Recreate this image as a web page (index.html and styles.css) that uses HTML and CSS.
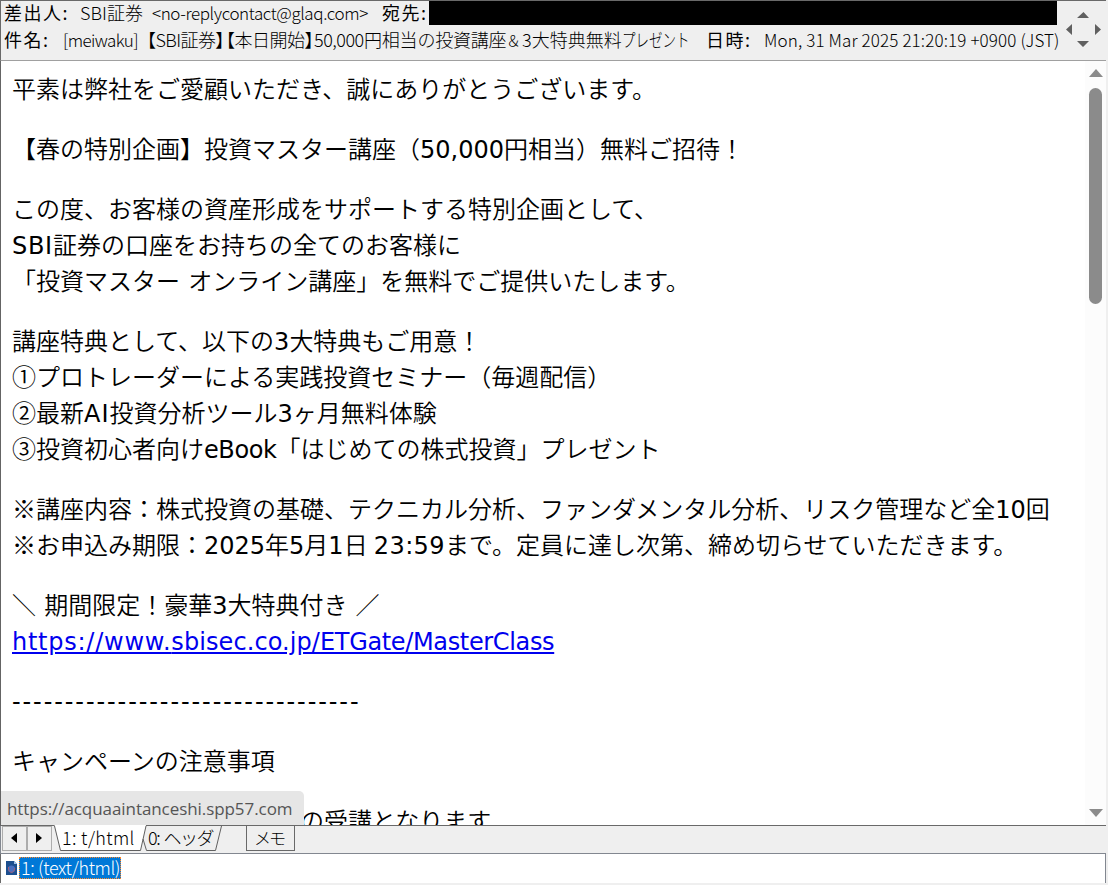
FILE: index.html
```html
<!DOCTYPE html>
<html lang="ja">
<head>
    <meta charset="utf-8" />
    <title>メール</title>
    <link rel="stylesheet" href="styles.css">
</head>
<body>
<div class="window">
    <header class="mail-header">
        <div class="fields">
            <div class="row">
                <b class="label from">差出人:</b>
                <span class="from-name">SBI証券</span>
                <span class="from-address">&lt;no-replycontact@glaq.com&gt;</span>
                <b class="label to">宛先:</b>
                <span class="redacted"></span>
            </div>
            <div class="row">
                <b class="label subject">件名:</b>
                <span class="tag">[meiwaku]</span>
                <span class="sender">【SBI証券】</span>
                <span class="opening">【本日開始】</span>
                <span class="amount">50,000</span>
                <span class="course">円相当の投資講座</span>
                <span class="amp">＆</span>
                <span class="bonus">3大特典無料</span>
                <span class="present"><span class="narrow">プレゼント</span></span>
                <b class="label date">日時:</b>
                <span class="date-value">Mon, 31 Mar 2025 21:20:19 +0900 (JST)</span>
            </div>
        </div>
        <svg class="pad" width="49" height="59" viewBox="1057 1 49 59">
            <path d="M1077 18 L1083.5 12 L1089 18Z M1077 41 H1089 L1083 47Z M1072 24 V35 L1066 29.5Z M1095 24 V35 L1101 29.5Z"/>
        </svg>
    </header>
    <div class="viewer">
        <main class="message">
            <p>平素は弊社をご愛顧いただき、誠にありがとうございます。</p>
            <p>【春の特別企画】投資マスター講座（<span class="en">50,000</span>円相当）無料ご招待！</p>
            <p>この度、お客様の資産形成をサポートする特別企画として、<br>
               <span class="en sbi">SBI</span>証券の口座をお持ちの全てのお客様に<br>
               「投資マスター オンライン講座」を無料でご提供いたします。</p>
            <p>講座特典として、以下の<span class="en">3</span>大特典もご用意！<br>
               ①プロトレーダーによる実践投資セミナー（毎週配信）<br>
               ②最新<span class="en ai">AI</span>投資分析ツール<span class="en">3</span>ヶ月無料体験<br>
               ③投資初心者向け<span class="en ebook">eBook</span>「はじめての株式投資」プレゼント</p>
            <p>※講座内容：株式投資の基礎、テクニカル分析、ファンダメンタル分析、リスク管理など全<span class="en">10</span>回<br>
               ※お申込み期限：<span class="en">2025</span>年<span class="en">5</span>月<span class="en">1</span>日 <span class="en time">23:59</span>まで。定員に達し次第、締め切らせていただきます。</p>
            <p>＼ 期間限定！豪華<span class="en">3</span>大特典付き ／<br>
               <a class="en" href="#"><span class="host">https://www.</span>sbisec.co.jp/<span class="path">ETGate/MasterClass</span></a></p>
            <p><span class="en rule">---------------------------------</span></p>
            <p>キャンペーンの注意事項</p>
            <p class="cut">の受講となります</p>
        </main>
        <div class="scrollbar">
            <svg width="14" height="8" viewBox="0 0 14 8"><path d="M0 8 L7 0 L14 8Z"/></svg>
            <div class="thumb"></div>
            <svg width="14" height="8" viewBox="0 0 14 8"><path d="M0 0 H14 L7 8Z"/></svg>
        </div>
        <div class="status">https://acquaaintanceshi.spp57.com</div>
    </div>
    <nav class="tabs">
        <span class="arrow"><svg width="6" height="10" viewBox="0 0 6 10"><path d="M6 0 V10 L0 5Z"/></svg></span>
        <span class="arrow"><svg width="6" height="10" viewBox="0 0 6 10"><path d="M0 0 V10 L6 5Z"/></svg></span>
        <div class="sheet">
            <svg class="sheet-lines" width="170" height="26" viewBox="53 825 170 26">
                <path class="active" d="M54.5 825 L60.5 850.5 H140.5 L146 825Z"/>
                <path d="M54.5 826 L60.5 850.5 H140.5 L146 826 M143 839 L146.5 850.5 H215.5 L221.5 826"/>
            </svg>
            <span class="sheet-html">1: t/html</span>
            <span class="sheet-head">0: ヘッダ</span>
        </div>
        <span class="memo">メモ</span>
    </nav>
    <footer class="parts">
        <svg width="11" height="14" viewBox="0 0 11 14">
            <path fill="#1d4f8f" d="M0 0 H8 L11 3 V14 H0Z"/>
            <path fill="#9fc0e8" d="M8 0 L11 3 H8Z"/>
            <circle cx="5.5" cy="8" r="3.6" fill="#4a6fc0"/>
            <path d="M2.5 6 Q2 11 6 11.5 Q9 10 8.8 7" fill="none" stroke="#a0607a"/>
        </svg>
        <span class="selected">1: (text/html)</span>
    </footer>
</div>
</body>
</html>
```
FILE: styles.css
```css
* { box-sizing: border-box; }
body {
    margin: 0;
    background: #efefef;
    color: #000;
    font-family: "Noto Sans CJK JP", sans-serif;
}
.window {
    display: flex;
    flex-direction: column;
    width: 1108px;
    height: 885px;
}
.mail-header {
    display: flex;
    height: 61px;
    width: 1106px;
    border-top: 1px solid #696969;
    border-left: 1px solid #696969;
    border-bottom: 1px solid #a0a0a0;
    font-size: 18px;
    font-weight: 300;
}
.fields { width: 1056px; }
.row {
    display: flex;
    height: 27px;
    line-height: 23px;
    white-space: nowrap;
    padding-left: 3px;
}
.row > * { flex: none; }
.label { letter-spacing: 1.5px; }
.from { width: 76px; }
.from-name { width: 72px; }
.from-address { width: 230px; font-size: 17px; letter-spacing: -0.4px; }
.to { width: 47px; }
.redacted { width: 628px; height: 24px; background: #000; }
.subject { width: 59px; }
.tag { width: 84px; font-size: 17px; letter-spacing: -0.6px; }
.sender { width: 79px; letter-spacing: -0.6px; }
.opening { width: 88px; letter-spacing: -0.5px; }
.sender, .opening { font-feature-settings: "halt"; }
.amount { width: 50px; letter-spacing: -0.5px; }
.course { width: 142px; letter-spacing: -0.2px; }
.amp { width: 16px; font-size: 15px; }
.bonus { width: 100px; }
.present { width: 84px; }
.narrow {
    display: inline-block;
    transform: scaleX(0.75);
    transform-origin: 0 0;
}
.date { width: 58px; }
.date-value { font-size: 17px; letter-spacing: 0.13px; }
.pad { fill: #606060; }
.viewer {
    position: relative;
    display: flex;
    height: 765px;
    width: 1106px;
    border-left: 1px solid #646464;
    border-bottom: 1px solid #696969;
    background: #fff;
    overflow: hidden;
}
.message {
    width: 1084px;
    padding: 9px 0 0 11px;
    font-size: 24px;
    line-height: 36px;
    font-weight: 350;
    word-spacing: 2.8px;
    white-space: nowrap;
}
.message p { margin: 0 0 24px; }
.message .cut { padding-left: 288px; }
.en {
    font-family: "DejaVu Sans", sans-serif;
    font-weight: 400;
    line-height: 0;
}
.sbi { letter-spacing: 0.7px; }
.ai { letter-spacing: 1px; }
.ebook { letter-spacing: -0.4px; }
.time { letter-spacing: 0.4px; margin-left: -2px; }
.rule { letter-spacing: 1.9px; }
a { color: #00e; letter-spacing: 0.084px; }
.host { letter-spacing: 0.75px; }
.path { letter-spacing: -0.35px; }
.scrollbar {
    display: flex;
    flex-direction: column;
    align-items: center;
    width: 21px;
    padding: 8px 0 8px;
    background: #fcfcfc;
    fill: #8b8b8b;
}
.thumb {
    width: 13px;
    height: 216px;
    margin: 11px 0 auto;
    border-radius: 7px;
    background: #8b8b8b;
}
.status {
    position: absolute;
    left: -1px;
    bottom: 0;
    width: 304px;
    height: 34px;
    padding-left: 7px;
    background: #e6e6e6;
    border-radius: 0 5px 0 0;
    color: #555;
    font: 17px/35px "Open Sans", sans-serif;
    letter-spacing: -0.07px;
}
.tabs {
    display: flex;
    height: 28px;
    width: 1106px;
    border-bottom: 1px solid #828790;
    border-left: 1px solid #828790;
    padding-left: 1px;
    font-size: 18px;
    font-weight: 300;
    line-height: 23px;
}
.arrow {
    display: flex;
    align-items: center;
    justify-content: center;
    width: 25px;
    height: 25px;
    border: 1px solid #adadad;
    padding: 0 2px 2px 0;
}
.sheet {
    position: relative;
    display: flex;
    width: 170px;
    padding-left: 10px;
}
.sheet-lines {
    position: absolute;
    left: 1px;
    top: -1px;
    fill: none;
    stroke: #606060;
}
.sheet-lines .active { fill: #fff; stroke: none; }
.sheet span { position: relative; white-space: nowrap; }
.sheet-html { width: 86px; letter-spacing: 0.3px; }
.sheet-head { letter-spacing: -1.5px; word-spacing: 2px; }
.memo {
    width: 49px;
    height: 25px;
    margin-left: 24px;
    border: 1px solid #696969;
    border-top: none;
    padding-left: 7px;
    font-size: 17px;
    letter-spacing: -2px;
}
.parts {
    display: flex;
    align-items: center;
    height: 29px;
    width: 1106px;
    padding: 0 0 2px 5px;
    background: #fff;
    border-left: 1px solid #696969;
    border-right: 1px solid #828790;
    font-size: 18px;
    font-weight: 300;
}
.selected {
    height: 22px;
    width: 102px;
    margin-left: 2px;
    padding-left: 1px;
    border: 1px dotted #ff8728;
    background: #0078d7;
    color: #fff;
    line-height: 19px;
    letter-spacing: -0.4px;
    white-space: nowrap;
}
```
